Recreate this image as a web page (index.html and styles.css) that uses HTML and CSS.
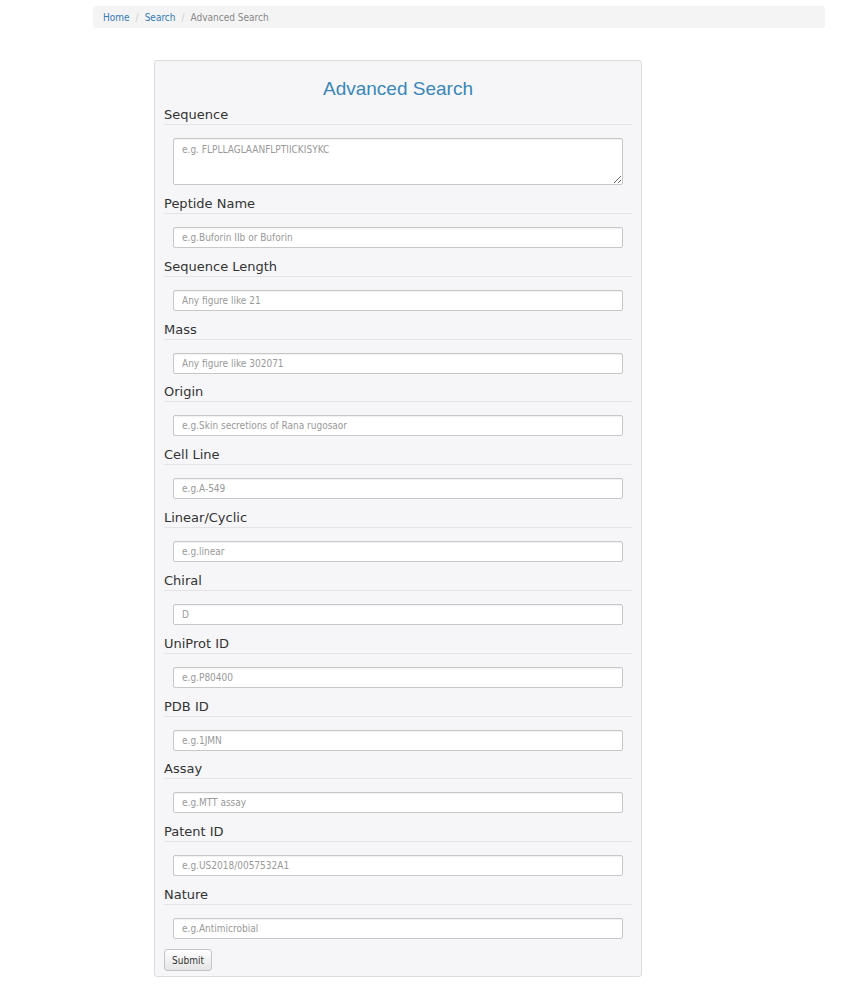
FILE: index.html
```html
<!DOCTYPE html>
<html>
<head>
<meta charset="utf-8">
<link rel="stylesheet" href="styles.css">
</head>
<body>
<ol class="breadcrumb">
  <li><a href="#">Home</a></li>
  <li class="sep">/</li>
  <li><a href="#">Search</a></li>
  <li class="sep">/</li>
  <li class="active">Advanced Search</li>
</ol>
<form class="card">
  <h2 class="title">Advanced Search</h2>
  <div class="field"><div class="label">Sequence</div><textarea class="control area" placeholder="e.g. FLPLLAGLAANFLPTIICKISYKC"></textarea></div>
  <div class="field"><div class="label">Peptide Name</div><input class="control" placeholder="e.g.Buforin IIb or Buforin"></div>
  <div class="field"><div class="label">Sequence Length</div><input class="control" placeholder="Any figure like 21"></div>
  <div class="field"><div class="label">Mass</div><input class="control" placeholder="Any figure like 302071"></div>
  <div class="field"><div class="label">Origin</div><input class="control" placeholder="e.g.Skin secretions of Rana rugosaor"></div>
  <div class="field"><div class="label">Cell Line</div><input class="control" placeholder="e.g.A-549"></div>
  <div class="field"><div class="label">Linear/Cyclic</div><input class="control" placeholder="e.g.linear"></div>
  <div class="field"><div class="label">Chiral</div><input class="control" placeholder="D"></div>
  <div class="field"><div class="label">UniProt ID</div><input class="control" placeholder="e.g.P80400"></div>
  <div class="field"><div class="label">PDB ID</div><input class="control" placeholder="e.g.1JMN"></div>
  <div class="field"><div class="label">Assay</div><input class="control" placeholder="e.g.MTT assay"></div>
  <div class="field"><div class="label">Patent ID</div><input class="control" placeholder="e.g.US2018/0057532A1"></div>
  <div class="field last"><div class="label">Nature</div><input class="control" placeholder="e.g.Antimicrobial"></div>
  <button type="button" class="btn">Submit</button>
</form>
</body>
</html>
```
FILE: styles.css
```css
html, body { margin: 0; padding: 0; background: #fff; }
body { font-family: "DejaVu Sans", Verdana, sans-serif; color: #333; }

.breadcrumb {
  list-style: none;
  margin: 6px 16px 0 93px;
  padding: 0 10px;
  height: 22px;
  background: #f4f4f4;
  border-radius: 3px;
  display: flex;
  align-items: center;
  gap: 6px;
  font-family: "DejaVu Sans Condensed", "DejaVu Sans", sans-serif;
  font-size: 10px;
}
.breadcrumb a { color: #337ab7; text-decoration: none; }
.breadcrumb .sep { color: #ccc; }
.breadcrumb .active { color: #888; }

.card {
  margin: 32px 0 0 154px;
  width: 468px;
  padding: 15px 9px 5px 9px;
  background: #f6f6f8;
  border: 1px solid #dcdcdc;
  border-radius: 3px;
  display: flex;
  flex-direction: column;
  align-items: flex-start;
}
.title {
  align-self: stretch;
  margin: 0 0 1px 0;
  text-align: center;
  font-family: "Liberation Sans", Arial, sans-serif;
  font-weight: normal;
  font-size: 19px;
  line-height: 26px;
  color: #3a87b8;
}
.field { align-self: stretch; display: flex; flex-direction: column; margin-bottom: 6.85px; }
.label {
  font-size: 13px;
  line-height: 17px;
  padding: 3px 0 1px 0;
  border-bottom: 1px solid #e4e4e6;
  color: #333;
}
.control {
  box-sizing: border-box;
  margin: 13px 9px 0 9px;
  height: 21px;
  padding: 0 8px;
  border: 1px solid #c8c8c8;
  border-radius: 2px;
  background: #fff;
  box-shadow: inset 0 1px 1px rgba(0,0,0,0.06);
  font-family: "DejaVu Sans Condensed", "DejaVu Sans", sans-serif;
  font-size: 10px;
  color: #555;
  outline: none;
}
.control::placeholder { color: #999; }
.area { height: 47px; padding: 5px 8px; resize: vertical; }
.field.last { margin-bottom: 10px; }
.btn {
  box-sizing: border-box;
  height: 22px;
  padding: 0 7px;
  font-family: "DejaVu Sans Condensed", "DejaVu Sans", sans-serif;
  font-size: 10px;
  color: #333;
  background: linear-gradient(#fff, #e4e4e4);
  border: 1px solid #c4c4c4;
  border-radius: 3px;
}
```
